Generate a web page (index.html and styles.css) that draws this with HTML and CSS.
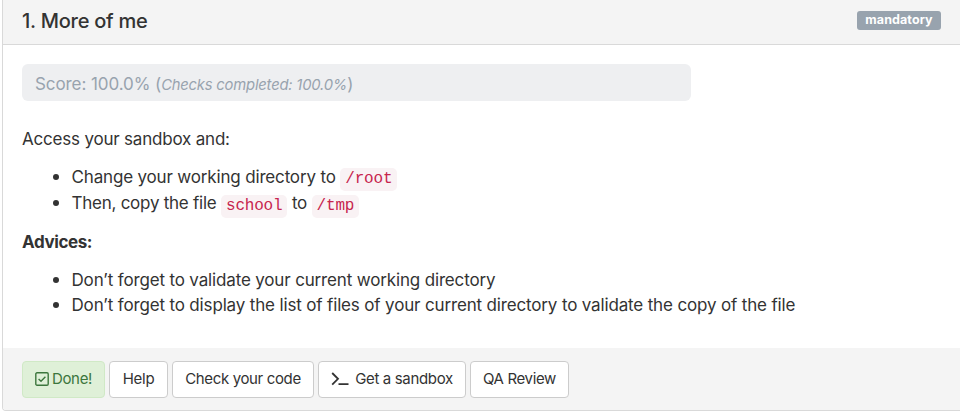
FILE: index.html
```html
<!DOCTYPE html>
<html lang="en">
<head>
<meta charset="utf-8">
<title>More of me</title>
<link rel="stylesheet" href="styles.css">
</head>
<body>
<section class="panel">
  <header class="panel-heading">
    <h3 class="title">1. More of me</h3>
    <span class="label">mandatory</span>
  </header>
  <div class="panel-body">
    <div class="score"><span class="score-main">Score: 100.0% (</span><em>Checks completed: 100.0%</em>)</div>
    <p class="intro">Access your sandbox and:</p>
    <ul class="tasks">
      <li>Change your working directory to <code>/root</code></li>
      <li class="copy">Then, copy the file <code>school</code> to <code>/tmp</code></li>
    </ul>
    <p class="advices">Advices:</p>
    <ul class="tips">
      <li>Don’t forget to validate your current working directory</li>
      <li>Don’t forget to display the list of files of your current directory to validate the copy of the file</li>
    </ul>
  </div>
  <footer class="panel-footer">
    <button class="btn btn-done"><svg class="check" viewBox="0 0 14 14"><rect x=".8" y=".8" width="12.4" height="12.4" rx="1.2"/><path d="M3.6 6.9 6 9.2 10.4 4.8"/></svg><span>Done!</span></button>
    <button class="btn btn-help">Help</button>
    <button class="btn btn-code">Check your code</button>
    <button class="btn btn-sandbox"><svg class="terminal" viewBox="0 0 18 14"><path d="M1.2 1 7 6.8 1.2 12.6M7.5 12.2H17.5"/></svg><span>Get a sandbox</span></button>
    <button class="btn btn-review">QA Review</button>
  </footer>
</section>
</body>
</html>
```
FILE: styles.css
```css
* { box-sizing: border-box; }
body {
  margin: 0;
  background: #fff;
  color: #333;
  font: 17px/25px Inter, "Liberation Sans", sans-serif;
  letter-spacing: -.155px;
  overflow: hidden;
}
.panel {
  width: 970px;
  height: 411px;
  margin-left: 2px;
  border: 1px solid #d9d9d9;
  border-top: 0;
  border-radius: 0 0 4px 4px;
  display: flex;
  flex-direction: column;
  overflow: hidden;
}
.panel-heading {
  height: 45px;
  flex: none;
  display: flex;
  justify-content: space-between;
  align-items: flex-start;
  padding: 8px 30px 0 19px;
  background: #f4f4f4;
  border-bottom: 1px solid #d9d9d9;
}
.title {
  margin: 0;
  font-size: 20px;
  font-weight: 500;
  line-height: 26px;
  letter-spacing: -.25px;
}
.label {
  width: 84px;
  height: 19px;
  margin-top: 3px;
  border-radius: 3px;
  background: #98a3ae;
  color: #fff;
  font-size: 12.5px;
  font-weight: 700;
  line-height: 18px;
  letter-spacing: .1px;
  text-align: center;
}
.panel-body { flex: 1; padding: 19px; }
.score {
  width: 669px;
  height: 37px;
  padding-left: 13px;
  border-radius: 6px;
  background: #eeeff1;
  color: #98a3ae;
  line-height: 40px;
  letter-spacing: 0;
  white-space: nowrap;
}
.score-main { letter-spacing: -.08px; }
.score em { font-size: 14.8px; letter-spacing: -.2px; }
p { margin: 0; }
.intro { margin-top: 26px; letter-spacing: -.2px; }
ul { margin: 0; padding-left: 30px; list-style: none; }
li { display: flex; white-space: pre; }
li::before {
  content: "";
  flex: none;
  width: 6px;
  height: 6px;
  margin: 9px 12.5px 0 1px;
  border-radius: 50%;
  background: #333;
}
.tasks { margin-top: 12px; }
.tasks li { display: block; height: 26px; line-height: 27px; letter-spacing: -.165px; }
.tasks li::before { display: inline-block; vertical-align: 3px; margin-top: 0; }
.tasks .copy { letter-spacing: -.25px; }
code {
  display: inline-block;
  height: 23px;
  padding: 0 5px;
  border-radius: 5px;
  background: #f9f2f4;
  color: #c7254e;
  font: 16px/23px "Liberation Mono", monospace;
  letter-spacing: -.2px;
}
.copy code { position: relative; top: 1px; }
.advices { margin-top: 14px; font-weight: 700; letter-spacing: -.4px; }
.tips { margin-top: 13px; }
.panel-footer {
  height: 62px;
  flex: none;
  display: flex;
  gap: 4px;
  padding: 13px 19px;
  background: #f4f4f4;
}
.btn {
  height: 37px;
  padding: 0 0 2px;
  display: flex;
  align-items: center;
  justify-content: center;
  border: 1px solid #ccc;
  border-radius: 4px;
  background: #fff;
  color: #333;
  font: 15px/20px Inter, "Liberation Sans", sans-serif;
  letter-spacing: -.35px;
  white-space: nowrap;
}
.btn-done { width: 83px; gap: 3px; background: #dff0d8; border-color: #d0e9c6; color: #3c763d; letter-spacing: -.3px; }
.btn-help { width: 59px; letter-spacing: -.25px; }
.btn-code { width: 142px; }
.btn-sandbox { width: 148px; gap: 6px; }
.btn-review { width: 99px; }
svg { fill: none; stroke: currentColor; }
.check { width: 14px; height: 14px; stroke-width: 1.4; }
.terminal { width: 18px; height: 14px; stroke-width: 1.8; }
```
